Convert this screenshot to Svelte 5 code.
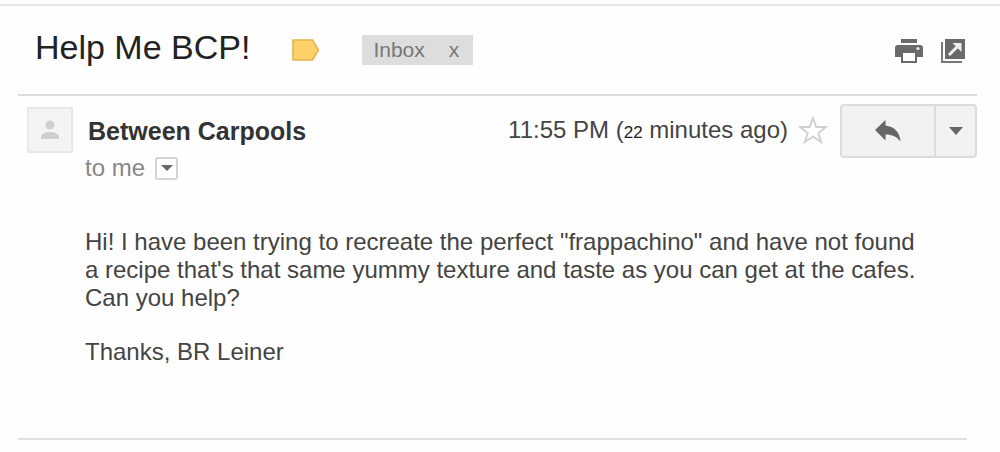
<script>
  let subject = 'Help Me BCP!';
  let sender = 'Between Carpools';
  let minutes = 22;

  let starred = $state(false);
  let inInbox = $state(true);
</script>

<main class="thread">
  <header class="subject-bar">
    <h1>{subject}</h1>
    <button class="icon-btn importance" type="button" aria-label="Important">
      <svg width="28" height="22" viewBox="0 0 28 22">
        <path d="M1 1H20.5L26.5 11L20.5 21H1Z" fill="#fdd068" stroke="#e3b54c" stroke-width="1.6" />
      </svg>
    </button>
    {#if inInbox}
      <div class="chip">
        <span>Inbox</span>
        <button type="button" aria-label="Remove Inbox label" onclick={() => (inInbox = false)}>x</button>
      </div>
    {/if}
    <div class="tools">
      <button class="icon-btn" type="button" aria-label="Print all">
        <svg width="28" height="24" viewBox="0 0 28 24">
          <path d="M6 0H22V4H6Z" fill="#6a6a6a" />
          <path d="M3 6H25Q28 6 28 9V18H22V13H6V18H0V9Q0 6 3 6Z" fill="#6a6a6a" />
          <rect x="7" y="13" width="14" height="10" fill="#fff" stroke="#6a6a6a" stroke-width="2" />
          <circle cx="23" cy="9.5" r="1.6" fill="#eee" />
        </svg>
      </button>
      <button class="icon-btn" type="button" aria-label="In new window">
        <svg width="24" height="24" viewBox="0 0 24 24">
          <path d="M1 3V23H21" fill="none" stroke="#777" stroke-width="2" />
          <rect x="4" width="20" height="20" fill="#6a6a6a" />
          <path d="M8 16L17 7" fill="none" stroke="#eee" stroke-width="3" />
          <path d="M11.5 4H20.5V13L17.5 10L14.5 7Z" fill="#eee" />
        </svg>
      </button>
    </div>
  </header>

  <article class="message">
    <div class="avatar">
      <svg width="20" height="20" viewBox="0 0 20 20" fill="#cfcfcf">
        <circle cx="10" cy="5" r="4.5" />
        <path d="M1 19V17C1 13.5 6 12 10 12S19 13.5 19 17V19Z" />
      </svg>
    </div>

    <div class="content">
      <div class="meta">
        <h2>{sender}</h2>
        <span class="time">11:55 PM (<small>{minutes}</small> minutes ago)</span>
        <button
          class="icon-btn star"
          type="button"
          aria-label="Star message"
          aria-pressed={starred}
          onclick={() => (starred = !starred)}
        >
          <svg width="30" height="30" viewBox="0 0 30 30">
            <path
              d="M15 2L18.3 11H28L20.3 17L23.2 26L15 20.5L6.8 26L9.7 17L2 11H11.7Z"
              fill={starred ? '#fdd068' : '#fff'}
              stroke="#cfcfcf"
              stroke-width="1.8"
            />
          </svg>
        </button>
        <div class="actions">
          <button class="reply" type="button" aria-label="Reply">
            <svg width="26" height="22" viewBox="0 0 26 22" fill="#666">
              <path d="M0 10L10.5 0V5.5C20 6.5 25 13 25.5 21.5C21.5 16.5 17 14.5 10.5 14.5V20.5Z" />
            </svg>
          </button>
          <button class="more" type="button" aria-label="More">
            <svg width="14" height="8" viewBox="0 0 14 8"><path d="M0 0H14L7 8Z" fill="#666" /></svg>
          </button>
        </div>
      </div>

      <div class="recipient">
        <span>to me</span>
        <button type="button" aria-label="Show details">
          <svg width="12" height="6" viewBox="0 0 12 6"><path d="M0 0H12L6 6Z" fill="#666" /></svg>
        </button>
      </div>

      <div class="body">
        <p>
          Hi! I have been trying to recreate the perfect "frappachino" and have not found<br />
          a recipe that's that same yummy texture and taste as you can get at the cafes.<br />
          Can you help?
        </p>
        <p>Thanks, BR Leiner</p>
      </div>
    </div>
  </article>
</main>

<style>
  :global(body) {
    margin: 0;
    background: #fefefe;
  }

  .thread {
    border-top: 2px solid #e8e8e8;
    margin-top: 4px;
    padding: 0 23px 0 18px;
    font-family: "Liberation Sans", Arial, sans-serif;
    font-size: 24px;
    color: #444;
  }

  h1, h2, p {
    margin: 0;
  }

  button {
    font: inherit;
    color: inherit;
    cursor: pointer;
    padding: 0;
  }

  svg {
    display: block;
  }

  .icon-btn {
    border: 0;
    background: none;
  }

  .subject-bar {
    display: flex;
    align-items: center;
    height: 88px;
    padding: 0 12px 0 17px;
    border-bottom: 2px solid #dcdcdc;
  }

  h1 {
    font-size: 34px;
    font-weight: 400;
    line-height: 40px;
    color: #222;
    padding-bottom: 6px;
  }

  .importance {
    margin-left: 42px;
  }

  .chip {
    display: flex;
    align-items: center;
    gap: 24px;
    height: 30px;
    margin-left: 42px;
    padding: 0 14px 0 11px;
    background: #ddd;
    color: #777;
    font-size: 21px;
  }

  .chip button {
    border: 0;
    background: none;
  }

  .tools {
    display: flex;
    gap: 18px;
    margin-left: auto;
    padding-top: 2px;
  }

  .message {
    display: flex;
    gap: 12px;
    margin-right: 10px;
    padding: 8px 0 72px 9px;
    border-bottom: 2px solid #e0e0e0;
  }

  .avatar {
    display: flex;
    flex: none;
    align-items: center;
    justify-content: center;
    box-sizing: border-box;
    width: 46px;
    height: 46px;
    margin-top: 3px;
    border: 2px solid #e8e8e8;
    background: #f4f4f4;
  }

  .content {
    flex: 1;
    min-width: 0;
  }

  .meta {
    display: flex;
    align-items: center;
    /* actions line up with the rule above, past the message itself */
    margin-right: -10px;
  }

  h2 {
    flex: 1;
    padding-left: 3px;
    font-size: 25px;
    line-height: 28px;
    color: #333;
  }

  .time {
    padding-bottom: 2px;
    white-space: nowrap;
  }

  .time small {
    font-size: 17px;
    color: #222;
  }

  .star {
    margin: 0 12px 0 10px;
  }

  .actions {
    display: flex;
    height: 54px;
    box-sizing: border-box;
    border: 2px solid #dcdcdc;
    border-radius: 4px;
    background: #f2f2f2;
  }

  .actions button {
    display: flex;
    align-items: center;
    justify-content: center;
    border: 0;
    background: none;
  }

  .actions .reply {
    width: 92px;
  }

  .actions .more {
    width: 41px;
    border-left: 2px solid #dcdcdc;
  }

  .recipient {
    display: flex;
    align-items: center;
    gap: 10px;
    height: 20px;
    color: #888;
  }

  .recipient button {
    display: flex;
    align-items: center;
    justify-content: center;
    box-sizing: border-box;
    width: 23px;
    height: 23px;
    border: 2px solid #d4d4d4;
    border-radius: 3px;
    background: #fff;
  }

  .body {
    margin-top: 50px;
    line-height: 28px;
  }

  .body p + p {
    margin-top: 26px;
  }
</style>
